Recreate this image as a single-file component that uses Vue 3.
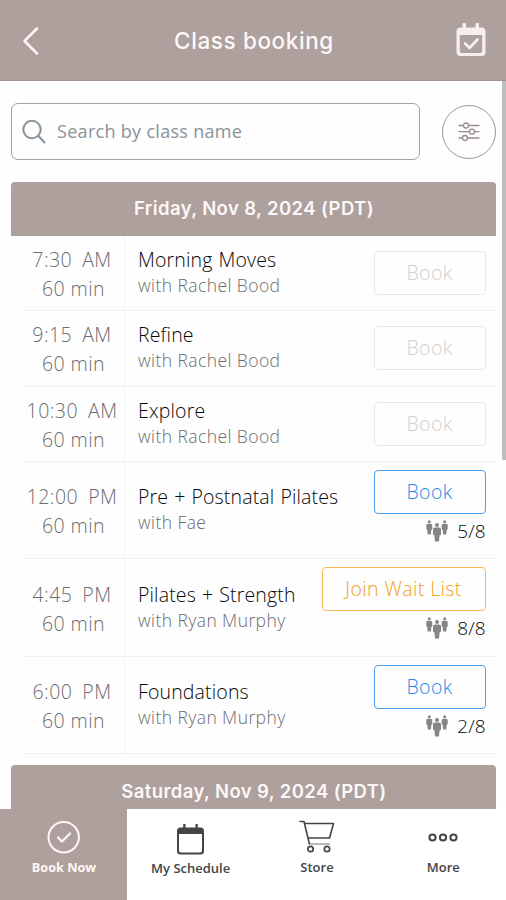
<script setup>
import { ref } from 'vue';

const search = ref('');
const activeTab = ref('Book Now');

const classes = [
    { time: '7:30', period: 'AM', name: 'Morning Moves', teacher: 'Rachel Bood', status: 'closed' },
    { time: '9:15', period: 'AM', name: 'Refine', teacher: 'Rachel Bood', status: 'closed' },
    { time: '10:30', period: 'AM', name: 'Explore', teacher: 'Rachel Bood', status: 'closed' },
    { time: '12:00', period: 'PM', name: 'Pre + Postnatal Pilates', teacher: 'Fae', status: 'open', spots: '5/8' },
    { time: '4:45', period: 'PM', name: 'Pilates + Strength', teacher: 'Ryan Murphy', status: 'waitlist', spots: '8/8' },
    { time: '6:00', period: 'PM', name: 'Foundations', teacher: 'Ryan Murphy', status: 'open', spots: '2/8' },
];

const tabs = ['Book Now', 'My Schedule', 'Store', 'More'];
</script>

<template>
    <div class="app">
        <header class="top-bar">
            <svg class="back" width="18" height="30" viewBox="0 0 18 30">
                <path d="M16 2.500 L3.500 15 L16 27.500" />
            </svg>
            <h1>Class booking</h1>
            <svg class="calendar" width="32" height="36" viewBox="0 0 32 36">
                <path class="solid" d="M7.500 5.500V2q0-1 1-1h1.500q1 0 1 1v3.500h9.500V2q0-1 1-1H23q1 0 1 1v3.500h2.500q4 0 4 4V30q0 4-4 4h-21q-4 0-4-4V9.500q0-4 4-4zM4.800 13v16q0 2 2 2h18.400q2 0 2-2V13z" fill-rule="evenodd" />
                <path class="tick" d="M10 21.500l4.500 4.500 8-8.500" />
            </svg>
        </header>

        <main class="content">
            <div class="filters">
                <label class="search">
                    <svg width="26" height="26" viewBox="0 0 26 26">
                        <circle cx="10" cy="10.500" r="8.700" />
                        <path d="M16.500 17l6 6.500" />
                    </svg>
                    <input v-model="search" type="text" placeholder="Search by class name">
                </label>
                <button class="filter-button">
                    <svg width="22" height="22" viewBox="0 0 22 22">
                        <path d="M1 4.500h4.500M10.500 4.500H21M1 10.700h10.500M16.500 10.700H21M1 17h3.500M9.500 17H21" />
                        <circle cx="8" cy="4.500" r="2.500" />
                        <circle cx="14" cy="10.700" r="2.500" />
                        <circle cx="7" cy="17" r="2.500" />
                    </svg>
                </button>
            </div>

            <section class="day">
                <h2>Friday, Nov 8, 2024 (PDT)</h2>
                <div v-for="item in classes" :key="item.name" class="row" :class="{ tall: item.spots }">
                    <div class="when">
                        <div><span>{{ item.time }}</span><span class="period">{{ item.period }}</span></div>
                        <div class="length">60 min</div>
                    </div>
                    <div class="what">
                        <div class="name">{{ item.name }}</div>
                        <div class="teacher">with {{ item.teacher }}</div>
                    </div>
                    <div class="action">
                        <button class="book" :class="item.status" :disabled="item.status === 'closed'">
                            {{ item.status === 'waitlist' ? 'Join Wait List' : 'Book' }}
                        </button>
                        <div v-if="item.spots" class="spots">
                            <svg width="22" height="22" viewBox="0 0 22 22">
                                <circle cx="3.300" cy="1.700" r="1.500" />
                                <path d="M1.800 3.700h3q1.500 0 1.500 1.500V9q0 .700-1 .900l-.400 4.600H1.700L1.300 9.900q-1-.200-1-.900V5.200q0-1.500 1.500-1.500z" />
                                <circle cx="18.700" cy="1.700" r="1.500" />
                                <path d="M17.200 3.700h3q1.500 0 1.500 1.500V9q0 .700-1 .900l-.400 4.600h-3.200l-.400-4.600q-1-.200-1-.900V5.200q0-1.500 1.500-1.500z" />
                                <circle cx="11" cy="5" r="2" />
                                <path d="M9 7.500h4q2 0 2 2v4.700q0 .900-1.400 1L13 21.500H9l-.600-6.300q-1.400-.100-1.400-1V9.500q0-2 2-2z" />
                            </svg>
                            <span>{{ item.spots }}</span>
                        </div>
                    </div>
                </div>
            </section>

            <section class="day next">
                <h2>Saturday, Nov 9, 2024 (PDT)</h2>
            </section>

            <div class="scrollbar"></div>
        </main>

        <nav class="tab-bar">
            <button v-for="tab in tabs" :key="tab" :class="{ active: tab === activeTab }" @click="activeTab = tab">
                <svg v-if="tab === 'Book Now'" width="36" height="36" viewBox="0 0 36 36">
                    <circle cx="17.700" cy="18.300" r="15.200" stroke-width="2" />
                    <path d="M12 18.500l4 4 8-8" stroke-width="2.200" />
                </svg>
                <svg v-else-if="tab === 'My Schedule'" width="36" height="36" viewBox="0 0 36 36">
                    <path class="fill" d="M10.200 8.500V5h2.300v3.500h10V5h2.300v3.500h2.700q3.500 0 3.500 3.500v20q0 3.500-3.500 3.500h-20q-3.500 0-3.500-3.500V12q0-3.500 3.500-3.500zM6 15v16.500q0 2 2 2h19q2 0 2-2V15z" fill-rule="evenodd" />
                </svg>
                <svg v-else-if="tab === 'Store'" width="36" height="36" viewBox="0 0 36 36">
                    <path d="M1 2.500h4L10.300 24.500M5.500 4.500h29L30.500 19H9" stroke-width="1.600" />
                    <path d="M10.300 25h20" stroke-width="1.600" opacity="0.5" />
                    <circle cx="11.500" cy="30" r="2.700" stroke-width="1.700" />
                    <circle cx="28" cy="30" r="2.700" stroke-width="1.700" />
                </svg>
                <svg v-else width="36" height="36" viewBox="0 0 36 36">
                    <circle cx="7.500" cy="18.500" r="3.100" stroke-width="2" />
                    <circle cx="18" cy="18.500" r="3.100" stroke-width="2" />
                    <circle cx="28.500" cy="18.500" r="3.100" stroke-width="2" />
                </svg>
                <span>{{ tab }}</span>
            </button>
        </nav>
    </div>
</template>

<style>
body {
    margin: 0;
    background: #fff;
}
</style>

<style scoped>
.app {
    display: flex;
    flex-direction: column;
    height: 100vh;
    overflow: hidden;
    background: #fefefe;
    font-family: "Open Sans", "Noto Sans", sans-serif;
    font-weight: 300;
}

button {
    padding: 0;
    font: inherit;
    background: none;
    cursor: pointer;
}

svg {
    fill: none;
    stroke-linecap: round;
    stroke-linejoin: round;
}

.top-bar {
    flex: none;
    display: flex;
    align-items: center;
    justify-content: space-between;
    box-sizing: border-box;
    height: 81px;
    padding: 0 19px 0 21px;
    background: #ada09d;
    border-bottom: 1px solid #a49491;
}

.top-bar h1 {
    margin: 1px 0 0 14px;
    color: #fdf8f7;
    font-family: Inter, sans-serif;
    font-size: 22.5px;
    font-weight: 500;
    letter-spacing: 0.6px;
}

.back {
    margin-top: 2px;
    stroke: #fdf5f3;
    stroke-width: 2.5;
}

.calendar .solid {
    fill: #f7efee;
}

.calendar .tick {
    stroke: #f7efee;
    stroke-width: 2.8;
}

.content {
    position: relative;
    flex: 1;
    min-height: 0;
    overflow: hidden;
    padding: 22px 10px 0 11px;
}

.filters {
    display: flex;
    align-items: center;
    justify-content: space-between;
    height: 57px;
}

.search {
    display: flex;
    align-items: center;
    box-sizing: border-box;
    width: 409px;
    height: 57px;
    padding-left: 10px;
    border: 1px solid #9ba4a7;
    border-radius: 7px;
}

.search svg {
    stroke: #87939a;
    stroke-width: 2;
}

.search input {
    flex: 1;
    min-width: 0;
    margin-left: 9px;
    padding: 0 0 2px;
    border: 0;
    outline: 0;
    background: none;
    font-family: inherit;
    font-size: 18px;
    font-weight: 400;
    letter-spacing: 0.3px;
}

.search input::placeholder {
    color: #87939a;
    opacity: 1;
}

.filter-button {
    display: flex;
    align-items: center;
    justify-content: center;
    box-sizing: border-box;
    width: 54px;
    height: 54px;
    border: 1px solid #939a9b;
    border-radius: 50%;
}

.filter-button svg {
    stroke: #978c8a;
    stroke-width: 1.3;
}

.day {
    margin-top: 21.500px;
}

.day.next {
    margin-top: 11.500px;
}

.day h2 {
    height: 54px;
    margin: 0;
    background: #ada09d;
    border-radius: 4px 4px 0 0;
    color: #fdf8f7;
    font-family: Inter, sans-serif;
    font-size: 18.500px;
    font-weight: 600;
    letter-spacing: 0.4px;
    line-height: 53px;
    text-align: center;
    text-indent: 1px;
}

.row {
    display: flex;
    box-sizing: border-box;
    height: 75.600px;
    margin-left: 11px;
    border-bottom: 1px solid #eff1f1;
}

.row.tall {
    height: 97.200px;
}

.when {
    display: flex;
    flex-direction: column;
    justify-content: center;
    box-sizing: border-box;
    width: 103px;
    padding: 2px 2px 0 0;
    border-right: 1px solid #f1f3f3;
    color: #6c6c6c;
    font-size: 19.500px;
    letter-spacing: 0.45px;
    line-height: 29px;
    text-align: center;
    white-space: nowrap;
}

.period {
    margin-left: 10px;
}

.length {
    padding-left: 3px;
}

.what {
    flex: 1;
    align-self: center;
    margin: 0 0 2px 13px;
    white-space: nowrap;
}

.name {
    color: #080808;
    font-size: 19.500px;
    letter-spacing: 0.15px;
    line-height: 26px;
    word-spacing: 0.8px;
}

.teacher {
    color: #6c6c6c;
    font-size: 17.500px;
    letter-spacing: 0.42px;
    line-height: 24px;
}

.action {
    display: flex;
    flex-direction: column;
    align-items: flex-end;
    justify-content: center;
    margin-right: 10.500px;
}

.tall .action {
    justify-content: flex-start;
    padding-top: 8px;
}

.book {
    width: 112px;
    height: 44px;
    border: 1.500px solid #4f9eec;
    border-radius: 4px;
    color: #2489ea;
    font-size: 19.500px;
    letter-spacing: 0.4px;
    line-height: 38px;
}

.book.closed {
    border-color: #e8e8e8;
    color: #d0d0d0;
}

.book.waitlist {
    width: 164px;
    border-color: #f8b553;
    color: #f29f20;
}

.spots {
    display: flex;
    align-items: center;
    gap: 9px;
    margin-top: 4px;
    color: #080808;
    font-size: 19px;
    line-height: 26px;
}

.spots svg {
    fill: #858585;
}

.scrollbar {
    position: absolute;
    top: 0;
    right: 0;
    width: 4px;
    height: 379px;
    background: #bdbdbd;
}

.tab-bar {
    flex: none;
    display: grid;
    grid-template-columns: 127px repeat(3, 1fr);
    height: 91px;
    background: #fff;
}

.tab-bar button {
    display: flex;
    flex-direction: column;
    align-items: center;
    padding: 10px 0 0 1px;
    border: 0;
    color: #444;
    font-family: "Open Sans", sans-serif;
    font-size: 13px;
    font-weight: 600;
    line-height: 20px;
}

.tab-bar button.active {
    background: #ada09d;
    color: #fff8f6;
    font-size: 12.700px;
    font-weight: 700;
}

.tab-bar svg {
    stroke: currentColor;
}

.tab-bar svg .fill {
    fill: currentColor;
    stroke: none;
}

.tab-bar span {
    margin-top: 2px;
}

.tab-bar button:nth-child(2) span {
    margin-top: 3px;
}
</style>
